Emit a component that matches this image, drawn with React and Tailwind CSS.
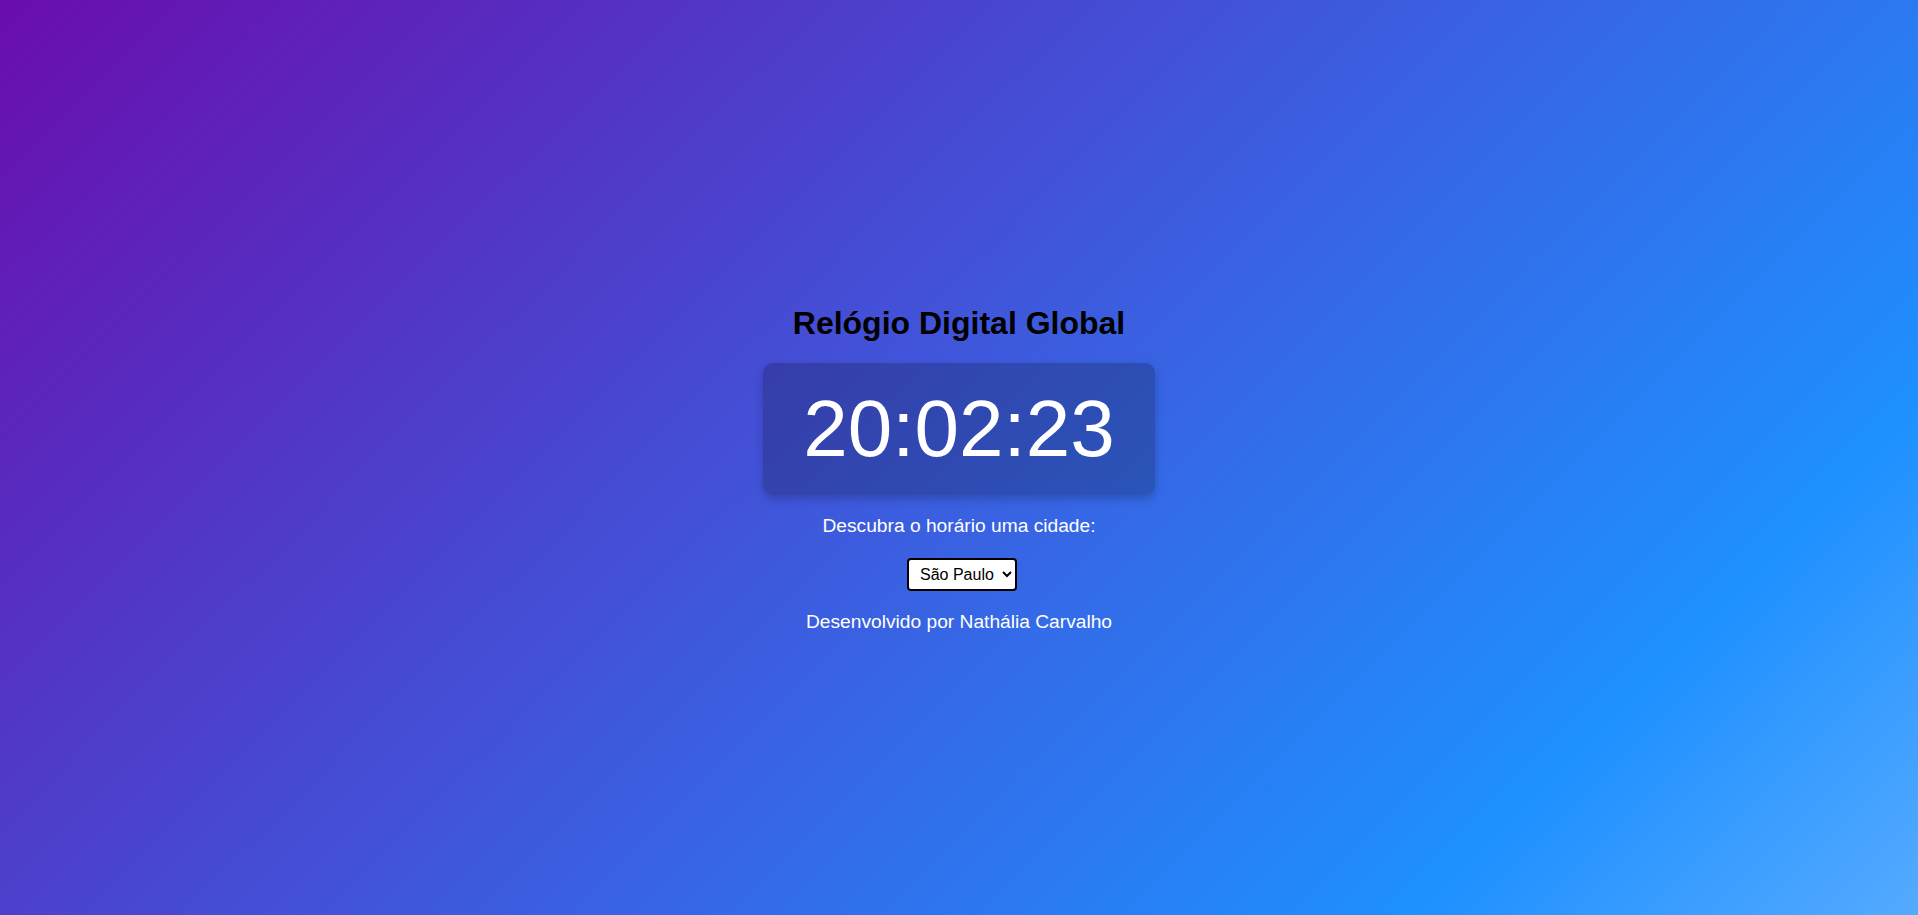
// App.jsx
import React, { useState } from "react";

const cities = ["São Paulo", "Nova York", "Londres", "Tóquio", "Sydney"];

export default function App() {
  const [city, setCity] = useState("São Paulo");

  return (
    <main className="min-h-screen w-full flex flex-col items-center justify-center pt-[21px] text-center font-['Liberation_Sans',Arial,sans-serif] bg-[linear-gradient(135deg,#6a0dad_0%,#1e90ff_82%,#55aaff_100%)]">
      <h1 className="text-[32px] leading-[37px] font-bold text-black my-[21px]">
        Relógio Digital Global
      </h1>

      <div className="rounded-[10px] bg-black/20 px-[40px] py-[20px] shadow-[0_4px_10px_rgba(0,0,0,0.2)]">
        <span className="block text-[80px] leading-[92px] text-white">20:02:23</span>
      </div>

      <p className="mt-[20px] text-[19.2px] leading-[22px] text-white">
        Descubra o horário uma cidade:
      </p>

      <select
        value={city}
        onChange={(e) => setCity(e.target.value)}
        className="mt-[21px] ml-[6px] bg-white text-black text-[16px] border-2 border-black rounded-[4px] pl-[7px] pr-[5px] py-[5px] font-['Liberation_Sans',Arial,sans-serif]"
      >
        {cities.map((c) => (
          <option key={c}>{c}</option>
        ))}
      </select>

      <p className="mt-[20px] mb-[20px] text-[19.2px] leading-[22px] text-white">
        Desenvolvido por Nathália Carvalho
      </p>
    </main>
  );
}
